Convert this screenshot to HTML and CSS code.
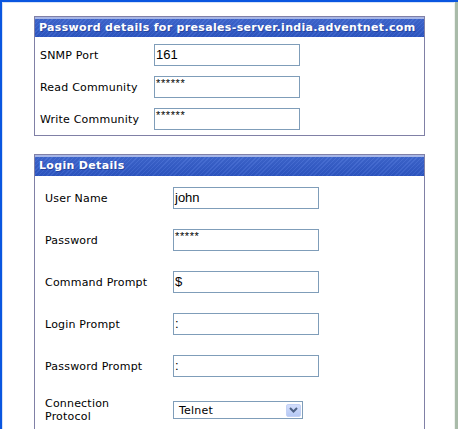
FILE: index.html
```html
<!DOCTYPE html>
<html>
<head>
<meta charset="utf-8">
<link rel="stylesheet" href="styles.css">
</head>
<body>
<div class="window">
  <div class="content">
    <section class="panel panel-snmp">
      <div class="panel-head">Password details for presales-server.india.adventnet.com</div>
      <div class="panel-body">
        <div class="label">SNMP Port</div>
        <div class="field">161</div>
        <div class="label">Read Community</div>
        <div class="field secret">******</div>
        <div class="label">Write Community</div>
        <div class="field secret">******</div>
      </div>
    </section>
    <section class="panel panel-login">
      <div class="panel-head">Login Details</div>
      <div class="panel-body">
        <div class="label">User Name</div>
        <div class="field">john</div>
        <div class="label">Password</div>
        <div class="field secret">*****</div>
        <div class="label">Command Prompt</div>
        <div class="field">$</div>
        <div class="label">Login Prompt</div>
        <div class="field">:</div>
        <div class="label">Password Prompt</div>
        <div class="field">:</div>
        <div class="label">Connection<br>Protocol</div>
        <div class="select"><span class="select-text">Telnet</span><span class="select-btn"><svg width="9" height="6" viewBox="0 0 9 6"><path d="M1 1 L4.5 4.5 L8 1" fill="none" stroke="#4d6185" stroke-width="2"/></svg></span></div>
      </div>
    </section>
  </div>
  <div class="scrollbar"></div>
</div>
</body>
</html>
```
FILE: styles.css
```css
html, body {
  margin: 0;
  padding: 0;
  background: #fff;
}
body {
  width: 458px;
  height: 429px;
  overflow: hidden;
  font-family: "DejaVu Sans", Verdana, sans-serif;
  font-size: 11px;
  color: #000;
}
.window {
  display: flex;
  height: 429px;
  border-top: 2px solid #0a56e0;
  border-left: 2px solid #0a56e0;
  box-sizing: border-box;
}
.content {
  flex: 1;
  border-top: 1px solid #d6e2f6;
  border-left: 1px solid #d6e2f6;
  padding: 13px 0 0 31px;
}
.scrollbar {
  width: 3px;
  background: #a9bba9;
  border-left: 1px solid #eef2ee;
}
.panel {
  width: 391px;
  border: 1px solid #8080a6;
  box-sizing: border-box;
  background: #fff;
}
.panel-login {
  margin-top: 18px;
  border-bottom: none;
}
.panel-head {
  height: 20px;
  box-sizing: border-box;
  border-top: 2px solid #a7b6e6;
  background:
    repeating-linear-gradient(135deg, rgba(255,255,255,0.06) 0 1px, rgba(0,0,0,0.04) 1px 3px),
    linear-gradient(#3e67d0, #2d56c4);
  color: #fff;
  font-weight: bold;
  font-size: 11px;
  letter-spacing: 0.33px;
  line-height: 17px;
  padding-left: 4px;
  text-shadow: 1px 1px 0 rgba(20,40,110,0.45);
  white-space: nowrap;
}
.panel-login .panel-head {
  height: 21px;
  line-height: 18px;
}
.panel-body {
  display: grid;
  align-items: center;
}
.panel-snmp .panel-body {
  grid-template-columns: 114px 146px;
  row-gap: 10px;
  padding: 7px 0 5px 5px;
}
.panel-login .panel-body {
  grid-template-columns: 128px 146px;
  row-gap: 20px;
  padding: 11px 0 10px 10px;
}
.label {
  line-height: 13px;
  letter-spacing: 0.2px;
}
.field {
  height: 22px;
  box-sizing: border-box;
  border: 1px solid #7f9db9;
  font-family: "Liberation Sans", Arial, sans-serif;
  font-size: 13px;
  line-height: 20px;
  padding-left: 1px;
  background: #fff;
}
.field.secret {
  font-size: 11px;
  line-height: 11px;
  padding-top: 1px;
  letter-spacing: 0.6px;
}
.select {
  width: 130px;
  height: 18px;
  box-sizing: border-box;
  border: 1px solid #7f9db9;
  display: flex;
  align-items: center;
  justify-content: space-between;
  padding: 0 1px 0 5px;
}
.select-text {
  font-size: 11px;
  letter-spacing: 0.2px;
}
.select-btn {
  width: 15px;
  height: 13px;
  border-radius: 2px;
  background: linear-gradient(#d2ddfb, #b6c9f5);
  border: 1px solid #c3d1f5;
  box-sizing: border-box;
  display: flex;
  align-items: center;
  justify-content: center;
}
```
